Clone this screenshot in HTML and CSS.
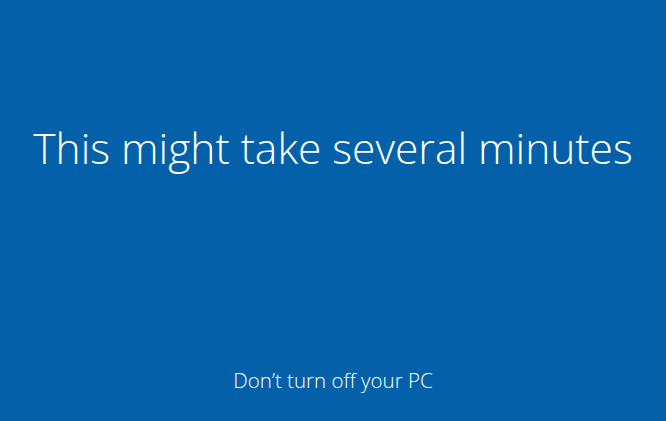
FILE: index.html
```html
<!DOCTYPE html>
<html>
<head>
<meta charset="utf-8">
<link rel="stylesheet" href="styles.css">
</head>
<body>
<div class="screen">
  <div class="main">
    <h1 class="title">This might take several minutes</h1>
  </div>
  <div class="footer">Don’t turn off your PC</div>
</div>
</body>
</html>
```
FILE: styles.css
```css
html, body {
  margin: 0;
  padding: 0;
  height: 100%;
}
body {
  background: #0461a9;
  color: #ffffff;
  font-family: "Open Sans", "Noto Sans", sans-serif;
  font-weight: 300;
}
.screen {
  height: 421px;
  display: flex;
  flex-direction: column;
  align-items: center;
}
.main {
  height: 296px;
  display: flex;
  align-items: center;
  justify-content: center;
}
.title {
  margin: 0;
  font-weight: 300;
  font-size: 42.5px;
  line-height: 50px;
  letter-spacing: 0;
  white-space: nowrap;
}
.footer {
  margin-top: 70px;
  font-size: 20.5px;
  line-height: 28px;
}
```
